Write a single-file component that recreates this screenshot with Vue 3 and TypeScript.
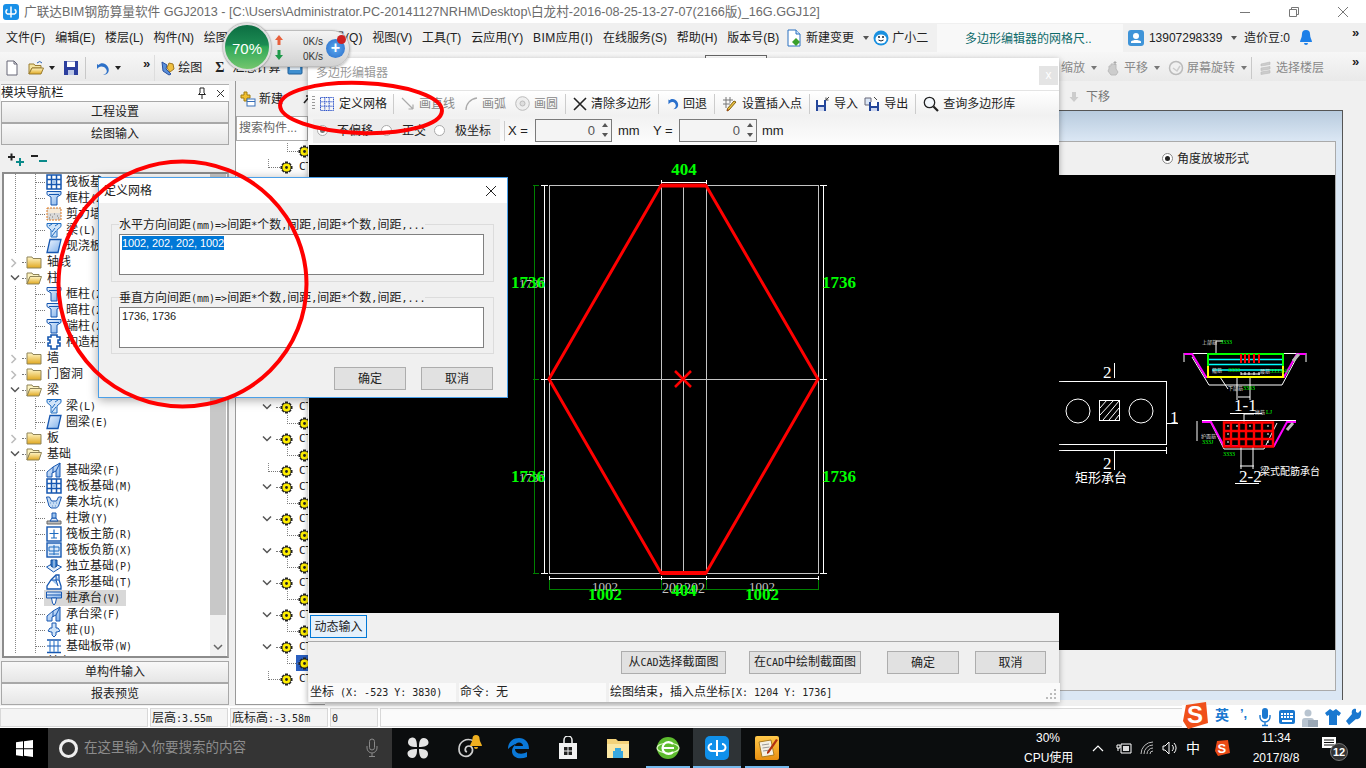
<script setup lang="ts">
import { h } from 'vue';

// CJK at 12px with half-width ascii, like the old bitmap font of the app
const Sim = (props: { t: string }) =>
  (props.t.match(/[\x00-\x7f]+|[^\x00-\x7f]+/g) ?? []).map((s) =>
    h('span', { class: /^[\x00-\x7f]/.test(s) ? 'asc' : '' }, s),
  );
Sim.props = ['t'];

const title =
  '广联达BIM钢筋算量软件 GGJ2013 - [C:\\Users\\Administrator.PC-20141127NRHM\\Desktop\\白龙村-2016-08-25-13-27-07(2166版)_16G.GGJ12]';

const menus = ['文件(F)', '编辑(E)', '楼层(L)', '构件(N)', '绘图(D)', '修改(M)', '钢筋量(Q)', '视图(V)', '工具(T)', '云应用(Y)', 'BIM应用(I)', '在线服务(S)', '帮助(H)', '版本号(B)'];

type Node = { label: string; icon: string; kind: 'closed' | 'open' | 'leaf'; hi?: boolean };
const navTree: Node[] = [
  { label: '筏板基', icon: 'i-raft', kind: 'leaf' },
  { label: '框柱(Z)', icon: 'i-col', kind: 'leaf' },
  { label: '剪力墙(Q)', icon: 'i-wall', kind: 'leaf' },
  { label: '梁(L)', icon: 'i-beam', kind: 'leaf' },
  { label: '现浇板(B)', icon: 'i-slab', kind: 'leaf' },
  { label: '轴线', icon: 'i-folder', kind: 'closed' },
  { label: '柱', icon: 'i-folder-open', kind: 'open' },
  { label: '框柱(Z)', icon: 'i-col', kind: 'leaf' },
  { label: '暗柱(Z)', icon: 'i-col', kind: 'leaf' },
  { label: '端柱(Z)', icon: 'i-col', kind: 'leaf' },
  { label: '构造柱(Z)', icon: 'i-post', kind: 'leaf' },
  { label: '墙', icon: 'i-folder', kind: 'closed' },
  { label: '门窗洞', icon: 'i-folder', kind: 'closed' },
  { label: '梁', icon: 'i-folder-open', kind: 'open' },
  { label: '梁(L)', icon: 'i-beam', kind: 'leaf' },
  { label: '圈梁(E)', icon: 'i-slab', kind: 'leaf' },
  { label: '板', icon: 'i-folder', kind: 'closed' },
  { label: '基础', icon: 'i-folder-open', kind: 'open' },
  { label: '基础梁(F)', icon: 'i-fbeam', kind: 'leaf' },
  { label: '筏板基础(M)', icon: 'i-raft', kind: 'leaf' },
  { label: '集水坑(K)', icon: 'i-pit', kind: 'leaf' },
  { label: '柱墩(Y)', icon: 'i-pier', kind: 'leaf' },
  { label: '筏板主筋(R)', icon: 'i-bar1', kind: 'leaf' },
  { label: '筏板负筋(X)', icon: 'i-bar2', kind: 'leaf' },
  { label: '独立基础(P)', icon: 'i-ind', kind: 'leaf' },
  { label: '条形基础(T)', icon: 'i-strip', kind: 'leaf' },
  { label: '桩承台(V)', icon: 'i-cap', kind: 'leaf', hi: true },
  { label: '承台梁(F)', icon: 'i-fbeam', kind: 'leaf' },
  { label: '桩(U)', icon: 'i-pile', kind: 'leaf' },
  { label: '基础板带(W)', icon: 'i-band', kind: 'leaf' },
  { label: '其它', icon: 'i-folder', kind: 'closed' },
];

// c = child, l = leaf, p = parent, s = selected child
const ctRows = ('cl' + 'pc'.repeat(7) + 'pcpc' + 'l' + 'pc'.repeat(5) + 'ps' + 'l').split('');

const apps = [
  { icon: 't-pin' },
  { icon: 't-swirl' },
  { icon: 't-edge' },
  { icon: 't-store' },
  { icon: 't-files' },
  { icon: 't-green', open: true },
  { icon: 't-app', open: true, active: true },
  { icon: 't-note', open: true },
];
</script>

<template>
  <div class="root">
    <svg class="defs" width="0" height="0">
      <defs>
        <linearGradient id="g-gold" x1="0" y1="0" x2="0" y2="1"><stop offset="0" stop-color="#fff6c8" /><stop offset="1" stop-color="#e0a820" /></linearGradient>
        <linearGradient id="g-blue" x1="0" y1="0" x2="1" y2="1"><stop offset="0" stop-color="#f0f6ff" /><stop offset="1" stop-color="#7fb0ea" /></linearGradient>
        <linearGradient id="g-note" x1="0" y1="0" x2="0" y2="1"><stop offset="0" stop-color="#ffc84a" /><stop offset="1" stop-color="#e88f10" /></linearGradient>
      </defs>
      <symbol id="i-folder" viewBox="0 0 16 16"><path d="M1 3h5l1 1.500h8V14H1z" fill="url(#g-gold)" stroke="#8f8458" /></symbol>
      <symbol id="i-folder-open" viewBox="0 0 16 16"><path d="M1 3h5l1 1.500h6V7H4L1 14z" fill="#fdf3c0" stroke="#8f8458" /><path d="M1 14l3-7.500h11.500L13 14z" fill="url(#g-gold)" stroke="#8f8458" /></symbol>
      <symbol id="i-col" viewBox="0 0 16 16"><path d="M1 1.500h14v3L11 7v8H5V7L1 4.500z" fill="url(#g-blue)" stroke="#1657b0" /><path d="M3 4.500h10" stroke="#1657b0" /></symbol>
      <symbol id="i-raft" viewBox="0 0 16 16"><rect x="1" y="1" width="14" height="14" fill="#fff" stroke="#1657b0" stroke-width="1.500" /><path d="M5.500 1v14M10.500 1v14M1 5.500h14M1 10.500h14" stroke="#1657b0" stroke-width="1.500" /><rect x="6.500" y="6.500" width="3" height="3" fill="#9cc3ee" /></symbol>
      <symbol id="i-wall" viewBox="0 0 16 16"><rect x="1" y="2" width="14" height="12" fill="#d8d8d8" stroke="#e07b20" stroke-dasharray="2 1" /><path d="M2 3h12v4H2z" fill="#f6ead8" /><path d="M4 9h1M8 8h1M11 10h1M6 11h1M3 12h1M12 12h1" stroke="#777" /></symbol>
      <symbol id="i-beam" viewBox="0 0 16 16"><path d="M1 1.500h14v3L11 8v7H5V8L1 4.500z" fill="#cfe3f8" stroke="#1f6cc0" /><path d="M6 14l4-5M6 10l3-4M3 4l3-2M9 4l3-2" stroke="#1f6cc0" /></symbol>
      <symbol id="i-slab" viewBox="0 0 16 16"><path d="M4 1.500h11L12 14.500H1z" fill="url(#g-blue)" stroke="#1657b0" stroke-width="1.300" /></symbol>
      <symbol id="i-post" viewBox="0 0 16 16"><path d="M5 1h6v2h3v3h-2v3h2v3h-3v3H5v-3H2V9h2V6H2V3h3z" fill="#fff" stroke="#1657b0" stroke-width="1.600" /></symbol>
      <symbol id="i-fbeam" viewBox="0 0 16 16"><path d="M1 15V10L7 5l7-4v14h-4V9L6 11v4z" fill="url(#g-blue)" stroke="#1657b0" /><path d="M10 9l4-8M7 5v6" stroke="#1657b0" /></symbol>
      <symbol id="i-pit" viewBox="0 0 16 16"><path d="M0.500 3h3l2 4h5l2-4h3l-3 9-2 2H5l-2-2z" fill="#c6dcf4" stroke="#1657b0" /><path d="M4 9h1M7 9h1M10 9h1M6 12h1M9 12h1" stroke="#5c90cc" /></symbol>
      <symbol id="i-pier" viewBox="0 0 16 16"><path d="M1 14v-3h14v3z" fill="#bcbcbc" stroke="#666" /><path d="M4 11l2-3h4l2 3z" fill="#dfe9f6" stroke="#1657b0" /><path d="M6 8V3h4v5z" fill="#9cc3ee" stroke="#1657b0" /></symbol>
      <symbol id="i-bar1" viewBox="0 0 16 16"><rect x="1" y="1" width="14" height="14" fill="#fff" stroke="#1657b0" stroke-width="1.400" /><path d="M3.500 7.500h9M8 3.500v8M5 12h6" stroke="#1f6cc0" stroke-width="1.200" fill="none" /></symbol>
      <symbol id="i-bar2" viewBox="0 0 16 16"><rect x="1" y="1" width="14" height="14" fill="#dbe9fa" stroke="#1657b0" stroke-width="1.400" /><path d="M3 5h10v4H3zM8 3v10M3 12h10" stroke="#1f6cc0" fill="none" /></symbol>
      <symbol id="i-ind" viewBox="0 0 16 16"><path d="M0.500 9l7-4 8 4-8 5z" fill="#e6f0fb" stroke="#1657b0" /><path d="M5 2h6v6l-3 2-3-2z" fill="#3a7cc8" stroke="#0e4a98" /><path d="M8 2v8" stroke="#cfe3f8" /></symbol>
      <symbol id="i-strip" viewBox="0 0 16 16"><path d="M1 15v-3l4-6 5-5h3v5l2 6v3H1z" fill="#fff" stroke="#1657b0" stroke-width="1.300" /><path d="M10 1v5l3 0M5 6h5l2 6" stroke="#1657b0" fill="#9cc3ee" /></symbol>
      <symbol id="i-cap" viewBox="0 0 16 16"><path d="M0.500 2h15v6H0.500z" fill="url(#g-blue)" stroke="#1657b0" /><path d="M5.500 8h5l-1 5-1.500 2-1.500-2z" fill="#fff" stroke="#1657b0" /><path d="M0.500 5h15" stroke="#1657b0" /></symbol>
      <symbol id="i-pile" viewBox="0 0 16 16"><path d="M6 1h4v5h2l2 3-3 1h-1v3l-2 2-2-2v-3H5L2 9l2-3h2z" fill="#cfe3f8" stroke="#1657b0" /></symbol>
      <symbol id="i-band" viewBox="0 0 16 16"><path d="M1 2h14M1 14.500h14" stroke="#1657b0" stroke-width="1.600" /><path d="M4 3v11M12 3v11M8 3v11" stroke="#6aa0dc" stroke-width="1.500" /><path d="M1 8h14" stroke="#1657b0" /></symbol>
      <symbol id="i-gear" viewBox="0 0 13 13"><path d="M5 0.500h3v2l1.500-1 2 2-1 1.500h2v3h-2l1 1.500-2 2-1.500-1v2H5v-2l-1.500 1-2-2 1-1.500h-2v-3h2l-1-1.500 2-2 1.500 1z" fill="#222" /><circle cx="6.500" cy="6.500" r="4" fill="#ffee00" /><circle cx="6.500" cy="6.500" r="1.400" fill="#222" /></symbol>
      <symbol id="i-logo" viewBox="0 0 16 16"><rect width="16" height="16" rx="3" fill="#1890e8" /><path d="M8 2.500v11M4.500 5.500A2.400 2.400 0 0 0 4.500 10h7a2.400 2.400 0 0 0 0-4.500" fill="none" stroke="#fff" stroke-width="1.500" /></symbol>
      <symbol id="t-pin" viewBox="0 0 24 24"><path d="M11 11C11 5 10 1 6 1.500 2 2 1 7 3 9c2 2 5 2 8 2zM13 11c5 0 10-1 9.500-5S17 1 15 3c-2 2-2 5-2 8zM13 13c0 5 1 10 5 9.500s5-5 3-7.500c-2-2-5-2-8-2zM11 13c-5 0-10 1-9.500 5S7 23 9 21c2-2 2-5 2-8z" fill="#e4e4e4" /></symbol>
      <symbol id="t-swirl" viewBox="0 0 24 24"><path d="M18 5C10 1 3 6 3 13s7 9 11 6 3-9-1-9-5 5-2 6" fill="none" stroke="#cfcfcf" stroke-width="1.700" /></symbol>
      <symbol id="t-edge" viewBox="0 0 24 24"><path d="M2 13C2 5 8 2 13 2c6 0 10 4 10 11H9c0 5 7 6 12 3v5c-7 3-15 1-15-6 0-3 2-6 5-7-3 0-6 2-9 5z" fill="#0a78d8" /><path d="M9 10c0-2 2-3.500 4-3.500S17 8 17 10z" fill="#0c0c0c" /></symbol>
      <symbol id="t-store" viewBox="0 0 24 24"><path d="M3 7h18v16H3z" fill="#f2f2f2" /><path d="M8 7V4a4 4 0 0 1 8 0v3" fill="none" stroke="#f2f2f2" stroke-width="1.500" /><path d="M8 11h3.500v3.500H8zM12.500 11H16v3.500h-3.500zM8 15.500h3.500V19H8zM12.500 15.500H16V19h-3.500z" fill="#222" /></symbol>
      <symbol id="t-files" viewBox="0 0 24 24"><path d="M1 3h9l2 2h11v17H1z" fill="#f4d27a" /><path d="M1 8h22v14H1z" fill="#fbe7a4" /><path d="M7 15h10v7H7z" fill="#38a8e0" /><path d="M9 12h6v3H9z" fill="#38a8e0" /></symbol>
      <symbol id="t-green" viewBox="0 0 24 24"><circle cx="12" cy="12" r="11" fill="#5dbb2e" /><ellipse cx="12" cy="12" rx="11" ry="5" fill="none" stroke="#d8f5c0" stroke-width="1.200" /><path d="M6 12h12M17 8a6 6 0 1 0 0 8" fill="none" stroke="#fff" stroke-width="2.200" /></symbol>
      <symbol id="t-app" viewBox="0 0 24 24"><rect width="24" height="24" rx="5" fill="#1090ea" /><path d="M12 4v16M7 8a3.500 3.500 0 0 0 0 7h10a3.500 3.500 0 0 0 0-7" fill="none" stroke="#fff" stroke-width="2" /></symbol>
      <symbol id="t-note" viewBox="0 0 24 24"><rect width="24" height="24" rx="2" fill="url(#g-note)" /><path d="M4 6l12-2 3 15-12 2z" fill="#f4f0e4" stroke="#a87c20" /><path d="M7 9l7-1M7.500 12l7-1M8 15l7-1" stroke="#999" /><path d="M21 3l2 1-9 13-2 1 0-2z" fill="#b03010" /></symbol>
    </svg>

    <!-- title bar -->
    <header class="titlebar">
      <svg class="logo"><use href="#i-logo" /></svg>
      <span class="title-text">{{ title }}</span>
      <div class="winctl">
        <svg width="12" height="12" viewBox="0 0 12 12"><path d="M1 6.500h10" stroke="#777" /></svg>
        <svg width="12" height="12" viewBox="0 0 12 12"><path d="M1.500 3.500h7v7h-7zM3.500 3.500v-2h7v7h-2" fill="none" stroke="#777" /></svg>
        <svg width="12" height="12" viewBox="0 0 12 12"><path d="M1 1l10 10M11 1L1 11" stroke="#777" /></svg>
      </div>
    </header>

    <!-- menu bar -->
    <nav class="menubar">
      <span v-for="m in menus" :key="m" class="menu" :class="{ gapped: m === '钢筋量(Q)', wide: m === 'BIM应用(I)' }">{{ m }}</span>
      <svg class="ico16 newchg" viewBox="0 0 16 18"><path d="M2 1h8l4 4v12H2z" fill="#fff" stroke="#2a70c0" /><path d="M10 1v4h4" fill="#cfe3f8" stroke="#2a70c0" /><path d="M10 9l4 4-4 4-4-4z" fill="#3aa02c" /></svg>
      <span class="menu">新建变更</span><i class="caret"></i>
      <svg class="ico16 bot" viewBox="0 0 16 16"><circle cx="8" cy="8" r="7.500" fill="#1890e0" /><ellipse cx="8" cy="9" rx="5.500" ry="4.500" fill="#fff" /><circle cx="6" cy="7" r="1" fill="#123" /><circle cx="10" cy="7" r="1" fill="#123" /><path d="M5.500 10q2.500 2 5 0" stroke="#123" fill="none" /></svg>
      <span class="menu gx">广小二</span>
      <div class="tip-tab">多边形编辑器的网格尺..</div>
      <svg class="ico16 avatar" viewBox="0 0 16 16"><rect width="16" height="16" rx="3" fill="#3f94d8" /><circle cx="8" cy="6" r="3" fill="#fff" /><path d="M3 13h10v-1.500c-2-2-8-2-10 0z" fill="#fff" /></svg>
      <span class="menu phone">13907298339</span><i class="caret"></i>
      <span class="menu bean">造价豆:0</span>
      <svg class="bell" width="12" height="18" viewBox="0 0 12 18"><path d="M6 1a4 4 0 0 0-4 4c0 4-2 6-2 8h12c0-2-2-4-2-8a4 4 0 0 0-4-4zM4 14h4a2 2 0 0 1-4 0z" fill="#1c7fe8" /></svg>
      <span class="chev">»</span>
    </nav>

    <!-- main tool bar -->
    <div class="toolbar">
      <svg class="ico16" viewBox="0 0 16 16"><path d="M3 1h7l3 3v11H3z" fill="#fff" stroke="#667" /><path d="M10 1v3h3" fill="none" stroke="#667" /></svg>
      <svg class="ico16 mg6" viewBox="0 0 16 16"><path d="M1 4h5l1 1.500h6V8H4l-3 6z" fill="#f4e4a0" stroke="#9a7c30" /><path d="M1 14l3-6h11.500L13 14z" fill="url(#g-gold)" stroke="#9a7c30" /><path d="M9 3q3-3 5 0" stroke="#2a60b0" fill="none" /></svg>
      <i class="caret dark"></i>
      <svg class="ico16 mg6" viewBox="0 0 16 16"><path d="M1 1h14v14H1z" fill="#2c3f9e" /><path d="M4 1.500h8V7H4z" fill="#fff" /><path d="M5 10h6v5H5z" fill="#bcc7e6" /></svg>
      <span class="vsep"></span>
      <svg class="ico16" viewBox="0 0 16 16"><path d="M3 4v5l1.500-1.500C6.500 6 10 6 12 9s0 5-3 6c5 0 7-4 5-8S7 2 4.500 5L3 4z" fill="#2c70c8" /></svg>
      <i class="caret dark"></i>
      <span class="chev tb">»</span>
      <span class="bar-grip"></span>
      <svg class="ico16" viewBox="0 0 16 16"><path d="M2 2l5 3-1 4 5 5-2 1-6-4z" fill="#5a8fd8" stroke="#2a50a0" /><path d="M9 3l4 1 1 5-4 3-3-4z" fill="#f0c040" stroke="#a07820" /></svg>
      <span class="tool">绘图</span>
      <span class="sigma">Σ</span>
      <span class="tool">汇总计算</span>
      <svg class="ico16" viewBox="0 0 16 16"><rect x="1" y="2" width="14" height="12" rx="1" fill="#3f8fd0" stroke="#205f98" /><rect x="3" y="4" width="10" height="6" fill="#e8f2fb" /></svg>
      <span class="peek"></span>
      <div class="tools-right">
        <span class="tool off">缩放</span><i class="caret"></i>
        <svg class="ico16" viewBox="0 0 16 16"><path d="M4 9V6h2V4h5v5l2 3-2 3H6L3 11z" fill="#ccc" stroke="#bbb" /><path d="M10 1v4M8.500 2.500h3" stroke="#aaa" /></svg>
        <span class="tool off">平移</span><i class="caret"></i>
        <svg class="ico16" viewBox="0 0 16 16"><circle cx="8" cy="8" r="6.500" fill="#f0f0f0" stroke="#bbb" stroke-width="1.500" /><path d="M5 8l4 3 3-5" fill="none" stroke="#ccc" stroke-width="1.500" /></svg>
        <span class="tool off">屏幕旋转</span><i class="caret"></i>
        <span class="vsep"></span>
        <svg class="ico16" viewBox="0 0 16 16"><path d="M4 4l9-2v2.500l-9 1.500zM4 8l9-1.500V9l-9 1.500zM4 12l9-1.500V13l-9 1.500z" fill="#ccc" stroke="#bbb" stroke-width=".6" /></svg>
        <span class="tool off">选择楼层</span>
        <span class="chev rt">»</span>
      </div>
    </div>

    <!-- work area -->
    <div class="work">
      <aside class="nav">
        <div class="nav-head">
          <span>模块导航栏</span>
          <svg width="10" height="12" viewBox="0 0 10 12"><path d="M3 1h4v5l1.500 1.500h-7L3 6zM5 7.500V12" fill="none" stroke="#222" /></svg>
          <svg width="9" height="9" viewBox="0 0 9 9"><path d="M1 1l7 7M8 1L1 8" stroke="#333" /></svg>
        </div>
        <button class="nav-btn">工程设置</button>
        <button class="nav-btn">绘图输入</button>
        <div class="nav-tools">
          <svg width="18" height="16" viewBox="0 0 18 16"><path d="M1 6h7M4.500 2.500v7" stroke="#222" stroke-width="2" /><path d="M9 11h8M13 7v8" stroke="#0a8a8a" stroke-width="2" /></svg>
          <svg width="18" height="16" viewBox="0 0 18 16"><path d="M1 5h7" stroke="#222" stroke-width="2" /><path d="M9 10h8" stroke="#0a8a8a" stroke-width="2" /></svg>
        </div>
        <div class="nav-tree">
          <div
            v-for="(n, i) in navTree"
            :key="i"
            class="nrow"
            :class="n.kind"
          >
            <svg v-if="n.kind === 'closed'" class="exp" width="8" height="10" viewBox="0 0 8 10"><path d="M1.500 1l4 4-4 4" fill="none" stroke="#bbb" stroke-width="1.500" /></svg>
            <svg v-if="n.kind === 'open'" class="exp" width="10" height="8" viewBox="0 0 10 8"><path d="M1 1.500l4 4 4-4" fill="none" stroke="#555" stroke-width="1.500" /></svg>
            <span class="hook"></span>
            <span class="nitem" :class="{ hi: n.hi }">
              <svg class="ico16"><use :href="'#' + n.icon" /></svg>
              <span class="nlabel"><Sim :t="n.label" /></span>
            </span>
          </div>
          <div class="scroll">
            <div class="thumb"></div>
            <svg width="10" height="7" viewBox="0 0 10 7"><path d="M1 1l4 4 4-4" fill="none" stroke="#666" stroke-width="1.500" /></svg>
          </div>
        </div>
        <button class="nav-btn low">单构件输入</button>
        <button class="nav-btn">报表预览</button>
      </aside>

      <section class="mid">
        <div class="mid-tools">
          <svg class="ico16" viewBox="0 0 16 16"><path d="M4 1h3v3h3v3H7v3H4V7H1V4h3z" fill="#f2c030" stroke="#a07c10" /><rect x="7" y="8" width="8" height="7" fill="#fff" stroke="#3a70b8" /><path d="M7 10.500h8" stroke="#3a70b8" /></svg>
          <span>新建</span>
          <svg class="arrow" width="10" height="12" viewBox="0 0 10 12"><path d="M2 10l6-7M4 3h4v4" fill="none" stroke="#222" stroke-width="1.600" /></svg>
        </div>
        <div class="search">搜索构件...</div>
        <div class="ct-tree">
          <div v-for="(r, i) in ctRows" :key="i" class="ct" :class="'ct-' + r">
            <template v-if="r === 'p'">
              <svg class="ct-exp" width="10" height="8" viewBox="0 0 10 8"><path d="M1 1.500l4 4 4-4" fill="none" stroke="#555" stroke-width="1.500" /></svg>
              <span class="ct-dot"></span>
            </template>
            <span v-else class="ct-hook"></span>
            <svg class="gear"><use href="#i-gear" /></svg>
            <span class="asc ct-text">CT</span>
          </div>
        </div>
      </section>

      <section class="right">
        <div class="sub-tools">
          <svg width="10" height="12" viewBox="0 0 10 12"><path d="M3 1h4v5h2.500L5 11 .5 6H3z" fill="#ccc" /></svg>
          <span>下移</span>
        </div>
        <div class="frame">
          <div class="pane">
            <div class="pane-head"><i class="radio on"></i><span>角度放坡形式</span></div>
            <svg class="preview" width="277" height="475" viewBox="1059 175 277 475">
              <g fill="none" stroke="#fff" shape-rendering="crispEdges">
                <path d="M1059 381.500h108.500V444.500H1059M1059 450.500h108M1167.500 447v7M1167.500 423.500h11M1115.500 363v15M1115.500 450v20" />
                <path d="M1100.500 400.500h20v20h-20z" />
              </g>
              <circle cx="1079" cy="411" r="12" fill="none" stroke="#fff" />
              <circle cx="1142" cy="411" r="12" fill="none" stroke="#fff" />
              <path d="M1101 408l7-8M1101 415l14-15M1104 420l16-19M1110 420l10-12M1116 420l4-5" stroke="#fff" />
              <text x="1104" y="378" class="cad w16">2</text>
              <text x="1171" y="423" class="cad w16">1</text>
              <text x="1104" y="469" class="cad w16">2</text>
              <text x="1076" y="482" class="cad w13">矩形承台</text>

              <!-- section 1-1 -->
              <path d="M1185 353.500h122M1193 357l17 28h73l15-28M1185 353v9M1307 353v9M1238 378v22M1251 378v22M1239 397h12M1221 377l8 12M1224 341h-7v12" fill="none" stroke="#fff" />
              <path d="M1185 354h8l14 23h13M1307 354h-9l-13 23h-15" fill="none" stroke="#f0f" stroke-width="2" />
              <path d="M1209 375v-21h75v21" fill="none" stroke="#0f0" stroke-width="2" />
              <path d="M1209 366v11h75v-11" fill="none" stroke="#ff0" stroke-width="2" />
              <path d="M1210 359.500h73M1210 364.500h73M1213 370h70" stroke="#0ff" stroke-width="1.500" />
              <path d="M1242 354v9M1246 354v9M1250 354v9M1255 354v9M1260 354v9" stroke="#f00" stroke-width="2" />
              <path d="M1242 372v3M1246 372v3M1250 372v3M1255 372v3M1260 372v3M1242 374h19" stroke="#fff" />
              <text x="1203" y="344" class="cad w6">上部筋</text><text x="1221" y="344" class="cad g6">3333</text>
              <text x="1213" y="372" class="cad w6">箍筋</text><text x="1229" y="372" class="cad g6">3333</text>
              <text x="1261" y="373" class="cad w6">腰筋</text><text x="1271" y="373" class="cad g6">3333(4)</text>
              <text x="1229" y="390" class="cad w6">下部筋</text><text x="1244" y="390" class="cad g6">3333</text>
              <text x="1235" y="411" class="cad w16">1-1</text>
              <path d="M1231 413.500h32" stroke="#fff" />

              <!-- section 2-2 -->
              <path d="M1203 420.500h94M1212 423l13 26h40l13-26M1198 421v20M1242 447v22M1254 447v22M1241 466h14M1255 414h-10v10" fill="none" stroke="#fff" />
              <path d="M1203 422h9l13 24h15M1297 422h-9l-13 24h-12" fill="none" stroke="#f0f" stroke-width="2" />
              <path d="M1225 422.500h49v24h-49zM1232 422v24M1240 422v24M1247 422v24M1255 422v24M1263 422v24M1225 431h49M1225 439h49" fill="none" stroke="#f00" stroke-width="2.400" />
              <path d="M1228 426h2M1237 426h2M1250 426h2M1268 426h2M1228 434h2M1268 434h2M1228 442h2M1268 442h2" stroke="#fff" />
              <text x="1256" y="414" class="cad w6">缘筋</text><text x="1267" y="414" class="cad g6">LJ</text>
              <text x="1202" y="438" class="cad w6">护面筋</text><text x="1203" y="444" class="cad g6">333J</text>
              <text x="1224" y="456" class="cad g6">3333</text>
              <text x="1240" y="482" class="cad w16">2-2</text>
              <path d="M1236 483.500h24" stroke="#fff" />
              <text x="1261" y="475" class="cad w10">梁式配筋承台</text>
              <path d="M1294 361l6-7M1288 430l6-7" stroke="#bbb" stroke-width="3" />
            </svg>
          </div>
        </div>
      </section>
    </div>

    <!-- status bar -->
    <footer class="statusbar">
      <span class="seg s1"></span>
      <span class="seg s2"><Sim t="层高:3.55m" /></span>
      <span class="seg s3"><Sim t="底标高:-3.58m" /></span>
      <span class="seg s4"><Sim t="0" /></span>
      <span class="seg s5"></span>
    </footer>

    <!-- taskbar -->
    <div class="taskbar">
      <div class="start">
        <svg width="17" height="17" viewBox="0 0 17 17"><path d="M0 2.300l7-1v7H0zM8 1.200L17 0v8.300H8zM0 9.300h7v7l-7-1zM8 9.300h9V17l-9-1.200z" fill="#fff" /></svg>
      </div>
      <div class="searchbox">
        <span class="cortana"></span>
        <span class="ph">在这里输入你要搜索的内容</span>
        <svg class="mic" width="12" height="20" viewBox="0 0 12 20"><rect x="3.500" y="1" width="5" height="11" rx="2.500" fill="none" stroke="#8a8a8a" /><path d="M1 8v2a5 5 0 0 0 10 0V8M6 15v3M3 18.500h6" fill="none" stroke="#8a8a8a" /></svg>
      </div>
      <div class="apps">
        <div v-for="a in apps" :key="a.icon" class="app" :class="{ open: a.open, active: a.active }">
          <svg class="app-ico"><use :href="'#' + a.icon" /></svg>
          <svg v-if="a.icon === 't-swirl'" class="alert" width="12" height="14" viewBox="0 0 12 14"><path d="M6 0a3.500 3.500 0 0 0-3.500 3.500C2.500 7 0 9 0 11h12c0-2-2.500-4-2.500-7.500A3.500 3.500 0 0 0 6 0zM4 12h4a2 2 0 0 1-4 0z" fill="#f0b020" /></svg>
        </div>
      </div>
      <div class="tray">
        <div class="cpu"><span>30%</span><span>CPU使用</span></div>
        <svg class="tr up" width="12" height="8" viewBox="0 0 12 8"><path d="M1 7l5-5 5 5" fill="none" stroke="#fff" stroke-width="1.200" /></svg>
        <svg class="tr bat" width="16" height="14" viewBox="0 0 16 14"><path d="M5 3h10v9H5z" fill="none" stroke="#fff" /><path d="M7 5h6v5H7z" fill="#ddd" /><path d="M1 4h3v3H1zM2 7v3" stroke="#fff" fill="none" /></svg>
        <svg class="tr wifi" width="16" height="14" viewBox="0 0 16 14"><path d="M1 13A12 12 0 0 1 13 1M4 13a9 9 0 0 1 9-9M7 13a6 6 0 0 1 6-6M10 13a3 3 0 0 1 3-3" fill="none" stroke="#bbb" /></svg>
        <svg class="tr vol" width="16" height="14" viewBox="0 0 16 14"><path d="M1 5h2l4-4v12l-4-4H1z" fill="none" stroke="#fff" /><path d="M10 4a4 4 0 0 1 0 6M12 2a7 7 0 0 1 0 10" fill="none" stroke="#fff" /></svg>
        <span class="ime">中</span>
        <svg class="tr sg" width="16" height="18" viewBox="0 0 16 18"><path d="M3 2l11-1 2 13-12 3-3-5z" fill="#ea4a16" /><text x="3.500" y="14" class="slogo">S</text></svg>
        <div class="clock"><span>11:34</span><span>2017/8/8</span></div>
        <div class="notif">
          <svg width="14" height="16" viewBox="0 0 14 16"><path d="M0 1h14v11H0z" fill="#fff" /><path d="M2 4h10M2 6.500h10M2 9h10" stroke="#111" /></svg>
          <span class="badge">12</span>
        </div>
      </div>
    </div>

    <!-- polygon editor window -->
    <div class="editor">
      <div class="ed-title">
        <span>多边形编辑器</span>
        <span class="ed-close">x</span>
      </div>
      <div class="ed-tools">
        <span class="grip"></span>
        <div class="t first">
          <svg class="ico14" viewBox="0 0 14 14"><path d="M.5.500h13v13H.500zM4.800.500v13M9.200.500v13M.5 4.800h13M.5 9.200h13" fill="none" stroke="#2a50c8" stroke-dasharray="1.200 .6" /></svg>
          <span>定义网格</span>
        </div>
        <span class="sep"></span>
        <div class="t off">
          <svg class="ico14" viewBox="0 0 14 14"><path d="M1 1l11 11M12 12V7.500M12 12H7.500" fill="none" stroke="#aaa" stroke-width="1.200" /></svg>
          <span>画直线</span>
        </div>
        <div class="t off">
          <svg class="ico14" viewBox="0 0 14 14"><path d="M2 13C2 7 6 2 13 1" fill="none" stroke="#aaa" stroke-width="1.300" /></svg>
          <span>画弧</span>
        </div>
        <div class="t off">
          <svg class="ico15" viewBox="0 0 15 15"><circle cx="7.500" cy="7.500" r="6.800" fill="#eee" stroke="#bbb" /><circle cx="7.500" cy="7.500" r="2.500" fill="#ddd" stroke="#bbb" /></svg>
          <span>画圆</span>
        </div>
        <span class="sep"></span>
        <div class="t">
          <svg class="ico14" viewBox="0 0 14 14"><path d="M1 1l12 12M13 1L1 13" stroke="#222" stroke-width="1.600" /></svg>
          <span>清除多边形</span>
        </div>
        <span class="sep"></span>
        <div class="t">
          <svg class="ico13" viewBox="0 0 16 16"><path d="M3 3v6l2-1.800C7 5.500 10 6 11.500 8.500s0 5-2.500 6.500c5 0 7-4 5.500-8S7 1 4.500 4z" fill="#2a70cc" /></svg>
          <span>回退</span>
        </div>
        <span class="sep"></span>
        <div class="t">
          <svg class="ico16" viewBox="0 0 16 16"><path d="M4 1v11M8 1v6M1 4h10M1 8h7" stroke="#777" /><path d="M14 6L7 14l-2 1 .5-2.500L12 5z" fill="#e8c040" stroke="#806010" /><path d="M5.500 13L5 15l2-1z" fill="#b03020" /></svg>
          <span>设置插入点</span>
        </div>
        <span class="sep tight"></span>
        <div class="t">
          <svg class="ico16" viewBox="0 0 16 16"><path d="M2 4h10v11H2z" fill="#24469a" /><path d="M4 4h6v5H4z" fill="#fff" /><path d="M4 11h6v4H4z" fill="#cdd6ee" /><path d="M15 1l-3 3M12 1.500V4h2.500" fill="none" stroke="#444" /></svg>
          <span>导入</span>
        </div>
        <div class="t near">
          <svg class="ico16" viewBox="0 0 16 16"><path d="M1 2h6v7H1z" fill="#dbe6f6" stroke="#667" /><path d="M5 6h10v9H5z" fill="#24469a" /><path d="M7 6h6v4H7z" fill="#fff" /><path d="M7 12h6v3H7z" fill="#cdd6ee" /><path d="M10 1l3 3" stroke="#444" /></svg>
          <span>导出</span>
        </div>
        <span class="sep"></span>
        <div class="t">
          <svg class="ico16" viewBox="0 0 16 16"><circle cx="6.500" cy="6.500" r="5.200" fill="#f4f8fc" stroke="#222" stroke-width="1.300" /><path d="M10.500 10.500L15 15" stroke="#222" stroke-width="2.200" /></svg>
          <span>查询多边形库</span>
        </div>
      </div>
      <div class="ed-opts">
        <div class="opt-group">
          <label class="opt"><i class="radio on"></i>不偏移</label>
          <label class="opt"><i class="radio"></i>正交</label>
          <label class="opt"><i class="radio"></i>极坐标</label>
        </div>
        <span class="sep opt-sep"></span>
        <span class="lat x-lab">X =</span>
        <div class="spin sx">0<i class="spin-btns"></i></div>
        <span class="lat mm">mm</span>
        <span class="lat y-lab">Y =</span>
        <div class="spin sy">0<i class="spin-btns"></i></div>
        <span class="lat mm2">mm</span>
      </div>
      <svg class="canvas" width="750" height="468" viewBox="309 145 750 468">
        <g stroke="#c4c4c4" shape-rendering="crispEdges" fill="none">
          <path d="M549.500 185v388M661.500 185v388M683.500 185v388M706.500 185v388M818.500 185v388M549 185.500h270M549 379.500h270M549 573.500h270" />
        </g>
        <g stroke="#fff" shape-rendering="crispEdges" fill="none">
          <path d="M544.500 185v388M823.500 185v388M661 182.500h45M549 578.500h270" />
          <path d="M541 185.500h7M541 379.500h7M541 573.500h7M820 185.500h7M820 379.500h7M820 573.500h7M661.500 180v5M706.500 180v5M549.500 576v5M661.500 576v5M706.500 576v5M818.500 576v5" />
        </g>
        <g stroke="#008000" shape-rendering="crispEdges" fill="none">
          <path d="M534.500 185v388M533 185.500h6M533 379.500h6M533 573.500h6M549 589.500h270M549.500 580v10M661.500 580v10M706.500 580v10M818.500 580v10" />
        </g>
        <text x="519" y="288" class="dim-g">1736</text>
        <text x="519" y="482" class="dim-g">1736</text>
        <text x="592" y="591" class="dim-g">1002</text>
        <text x="749" y="591" class="dim-g">1002</text>
        <text x="662" y="593" class="dim-g2">202</text>
        <text x="684" y="593" class="dim-g2">202</text>
        <polygon points="661,185.500 706,185.500 818,379 706,573 661,573 549,379" fill="none" stroke="#f00" stroke-width="3" />
        <path d="M661 185.500h45M661 573h45" stroke="#f00" stroke-width="4" />
        <path d="M675 371l16 16M691 371l-16 16" stroke="#f00" stroke-width="2.500" />
        <text x="684" y="175" class="dim c">404</text>
        <text x="511" y="288" class="dim">1736</text>
        <text x="511" y="482" class="dim">1736</text>
        <text x="822" y="288" class="dim">1736</text>
        <text x="822" y="482" class="dim">1736</text>
        <text x="605" y="600" class="dim c">1002</text>
        <text x="684" y="596" class="dim c">404</text>
        <text x="762" y="600" class="dim c">1002</text>
      </svg>
      <div class="ed-tabs"><span class="tab"><span>动态输入</span></span></div>
      <div class="ed-btns">
        <button class="btn b1"><Sim t="从CAD选择截面图" /></button>
        <button class="btn b2"><Sim t="在CAD中绘制截面图" /></button>
        <button class="btn b3">确定</button>
        <button class="btn b4">取消</button>
      </div>
      <div class="ed-status">
        <span class="st s-a"><Sim t="坐标 (X: -523 Y: 3830)" /></span>
        <span class="st s-b"><Sim t="命令: 无" /></span>
        <span class="st s-c"><Sim t="绘图结束，插入点坐标[X: 1204 Y: 1736]" /></span>
        <svg class="resize" width="12" height="12" viewBox="0 0 12 12"><path d="M9 1h2v2H9zM5 5h2v2H5zM9 5h2v2H9zM1 9h2v2H1zM5 9h2v2H5zM9 9h2v2H9z" fill="#bbb" /></svg>
      </div>
    </div>

    <!-- define grid dialog -->
    <div class="dialog">
      <div class="dlg-title">
        <span>定义网格</span>
        <svg width="12" height="12" viewBox="0 0 12 12"><path d="M1 1l10 10M11 1L1 11" stroke="#222" /></svg>
      </div>
      <div class="dlg-body">
        <fieldset class="grp">
          <legend><Sim t="水平方向间距(mm)=>间距*个数,间距,间距*个数,间距,..." /></legend>
          <div class="area"><span class="sel">1002, 202, 202, 1002</span></div>
        </fieldset>
        <fieldset class="grp g2">
          <legend><Sim t="垂直方向间距(mm)=>间距*个数,间距,间距*个数,间距,..." /></legend>
          <div class="area"><span>1736, 1736</span></div>
        </fieldset>
        <div class="dlg-btns">
          <button class="btn d1">确定</button>
          <button class="btn d2">取消</button>
        </div>
      </div>
    </div>

    <!-- sogou input bar -->
    <div class="imebar">
      <svg class="sg-big" width="26" height="27" viewBox="0 0 26 27"><path d="M4 3l20-3 2 21-20 6-5-8z" fill="#f0501a" /><text x="5" y="21" class="slogo big">S</text></svg>
      <span class="ime-ch">英</span>
      <span class="ime-dot">’,</span>
      <svg width="12" height="20" viewBox="0 0 12 20" class="ic1"><rect x="3" y="1" width="6" height="11" rx="3" fill="#1a78d0" /><path d="M1 8v2a5 5 0 0 0 10 0V8M6 15v3M3 18.500h6" fill="none" stroke="#1a78d0" stroke-width="1.400" /></svg>
      <svg width="16" height="14" viewBox="0 0 16 14" class="ic2"><rect width="16" height="14" rx="2" fill="#1a78d0" /><path d="M2 3h2v2H2zM5 3h2v2H5zM8 3h2v2H8zM11 3h3v2h-3zM2 6h2v2H2zM5 6h2v2H5zM8 6h2v2H8zM11 6h3v2h-3zM3 10h10v2H3z" fill="#fff" /></svg>
      <svg width="16" height="18" viewBox="0 0 16 18" class="ic3"><circle cx="6" cy="4" r="3.500" fill="#b8c4d0" /><path d="M0 18v-6q0-3 3-3h6q3 0 3 3v6z" fill="#b8c4d0" /><rect x="6" y="11" width="10" height="7" fill="#9aa8b6" /></svg>
      <svg width="16" height="16" viewBox="0 0 16 16" class="ic4"><path d="M5 0l3 2 3-2 5 4-2 3-2-1v10H4V6L2 7 0 4z" fill="#1a78d0" /></svg>
      <svg width="16" height="18" viewBox="0 0 16 18" class="ic5"><path d="M15 2l-3 3-2-1 0-3c-3-1-5 2-4 5L0 13l3 4 7-6c3 1 6-2 5-9z" fill="#1a78d0" /></svg>
    </div>

    <!-- network / memory widget -->
    <div class="widget">
      <div class="ball">70%</div>
      <div class="w-arrows">
        <svg width="8" height="10" viewBox="0 0 8 10"><path d="M4 0l4 5H5.500v5h-3V5H0z" fill="#e8603c" /></svg>
        <svg width="8" height="10" viewBox="0 0 8 10"><path d="M4 10L0 5h2.500V0h3v5H8z" fill="#1f9a4a" /></svg>
      </div>
      <div class="w-speeds"><span>0K/s</span><span>0K/s</span></div>
      <div class="w-plus">+<i></i></div>
    </div>

    <!-- hand drawn marks on the screenshot -->
    <svg class="marks" width="1366" height="768">
      <ellipse cx="182.500" cy="284" rx="124" ry="122.500" fill="none" stroke="#f00" stroke-width="4" />
      <ellipse cx="361" cy="108" rx="81" ry="25" fill="none" stroke="#f00" stroke-width="4" transform="rotate(2 361 108)" />
    </svg>
  </div>
</template>

<style scoped>
.root {
  position: relative;
  width: 1366px;
  height: 768px;
  overflow: hidden;
  background: #f0f0f0;
  font: 12px/16px "Liberation Sans", "Noto Sans CJK SC", sans-serif;
  color: #222;
}
.defs { position: absolute; }
.ico16 { width: 16px; height: 16px; flex: none; }
.ico15 { width: 15px; height: 15px; flex: none; }
.ico14 { width: 14px; height: 14px; flex: none; }
.ico13 { width: 13px; height: 13px; flex: none; }
button { font: inherit; color: inherit; padding: 0; }

.titlebar { height: 23px; display: flex; align-items: center; background: #fff; position: relative; }
.logo { width: 16px; height: 16px; margin: 0 5px 0 3px; }
.title-text { font-size: 12.650px; color: #6b6b6b; white-space: nowrap; }
.winctl { position: absolute; left: 1239px; top: 6px; display: flex; gap: 36px; }
.winctl svg + svg { margin-left: 1px; }

.menubar { height: 29px; display: flex; align-items: center; gap: 9.800px; padding-left: 6px; background: #f0f0f0; white-space: nowrap; position: relative; }
.gapped { margin-left: 3px; }
.wide { letter-spacing: .45px; }
.newchg { margin: 0 -6px 0 -3px; height: 18px; }
.caret { width: 0; height: 0; border: 3px solid transparent; border-top: 4px solid #555; border-bottom: 0; flex: none; }
.caret.dark { border-top-color: #222; }
.menubar .caret { margin-left: -1px; }
.bot { margin-left: -6px; }
.gx { margin-left: -6px; }
.tip-tab { position: absolute; left: 937px; top: 1px; width: 186px; height: 28px; line-height: 30px; background: #f8f8f8; color: #0d6a6a; font-size: 12px; padding-left: 28px; box-sizing: border-box; }
.avatar { margin-left: 190px; }
.phone { margin-left: -5px; }
.bean { margin-left: -3px; }
.chev { position: absolute; left: 1352px; top: 2px; font-size: 13px; font-weight: 700; }

.toolbar { height: 29px; display: flex; align-items: center; padding: 2px 0 0 4px; background: linear-gradient(#f7f7f7, #e9e9e9); position: relative; box-sizing: border-box; }
.mg6 { margin-left: 8px; }
.toolbar .caret { margin: 0 0 0 5px; }
.toolbar > .vsep { margin: 0 8px 0 6px; }
.vsep { width: 1px; height: 22px; background: #c8c8c8; flex: none; }
.chev.tb { position: static; margin: -8px 4px 0 22px; }
.bar-grip { width: 1px; height: 26px; background: #ddd; margin-right: 5px; }
.tool { margin-left: 2px; }
.sigma { font: 700 14px "Liberation Serif", serif; margin: 0 6px 0 13px; }
.toolbar > .tool + svg { margin-left: 7px; }
.peek { position: absolute; left: 705px; top: 3px; width: 62px; height: 4px; border: 1px solid #666; border-bottom: 0; box-sizing: border-box; background: #fff; }
.tools-right { position: absolute; left: 1061px; top: 0; right: 0; height: 31px; display: flex; align-items: center; color: #555; }
.tools-right .tool { margin-left: 3px; white-space: nowrap; }
.tools-right .tool:first-child { margin-left: 0; }
.tools-right .caret { margin: 0 8px 0 6px; border-top-color: #777; }
.tools-right .vsep { margin: 0 5px 0 -4px; }
.tools-right .chev.rt { position: absolute; left: 291px; top: 2px; margin: 0; color: #222; }
.off { color: #888; }

.work { display: flex; height: 625px; background: #f0f0f0; }

.nav { width: 228px; margin-left: 1px; flex: none; display: flex; flex-direction: column; }
.nav-head { height: 17px; margin-top: 3px; display: flex; align-items: center; gap: 9px; background: #fff; border-top: 1px solid #b0b0b0; box-sizing: border-box; }
.nav-head span { margin-right: auto; font-size: 12.500px; }
.nav-head svg:last-child { margin-right: 4px; }
.nav-btn { height: 22px; flex: none; border: 1px solid #a8a8a8; background: linear-gradient(#f8f8f8, #e6e6e6); box-sizing: border-box; text-align: center; font-size: 12px; }
.nav-btn.low { margin-top: 3px; }
.nav-tools { height: 27px; flex: none; display: flex; align-items: center; gap: 5px; padding-left: 6px; }
.nav-tree { height: 486px; flex: none; position: relative; box-sizing: border-box; border: 2px solid #8c8c8c; border-right-color: #aaa; background: #fff; overflow: hidden; padding-top: 0; margin-left: 1px; }
.nrow { height: 16px; display: flex; align-items: center; position: relative; }
.nrow.leaf { background:
  repeating-linear-gradient(#888 0 1px, transparent 1px 2px) 11px 0 / 1px 100% no-repeat,
  repeating-linear-gradient(#888 0 1px, transparent 1px 2px) 31px 0 / 1px 100% no-repeat; }
.exp { position: absolute; left: 6px; top: 4px; }
.hook { position: absolute; height: 0; top: 8px; border-top: 1px dotted #777; }
.leaf .hook { left: 31px; width: 10px; }
.closed .hook, .open .hook { left: 18px; width: 4px; }
.nitem { display: flex; align-items: center; gap: 4px; position: absolute; white-space: nowrap; height: 16px; }
.leaf .nitem { left: 40px; padding: 0 6px 0 2px; }
.closed .nitem, .open .nitem { left: 22px; gap: 5px; }
.nitem.hi { background: #d8d8d8; height: 16px; }
.scroll { position: absolute; left: 206px; top: -2px; width: 16px; height: 486px; background: #f0f0f0; }
.thumb { height: 443px; background: #c8c8c8; }
.scroll svg { position: absolute; left: 3px; top: 472px; }

.mid { width: 90px; flex: none; margin-left: 6px; display: flex; flex-direction: column; background: #fff; border-left: 1px solid #999; border-bottom: 1px solid #999; height: 624px; box-sizing: border-box; position: relative; }
.mid-tools { height: 35px; flex: none; display: flex; align-items: center; gap: 3px; padding-left: 4px; background: #f0f0f0; }
.mid-tools .arrow { margin-left: 16px; }
.search { position: absolute; left: 0; top: 35px; width: 72px; height: 25px; line-height: 23px; border: 1px solid #aaa; background: #fff; box-sizing: border-box; color: #666; padding-left: 2px; white-space: nowrap; overflow: hidden; }
.ct-tree { position: relative; margin-top: 27px; }
.ct { height: 16px; position: relative; }
.ct-exp { position: absolute; left: 26px; top: 4px; }
.ct-dot { position: absolute; left: 40px; top: 8px; width: 4px; border-top: 1px dotted #777; }
.ct-hook { position: absolute; top: 8px; height: 0; border-top: 1px dotted #777; }
.gear { position: absolute; width: 13px; height: 13px; top: 2px; }
.ct-text { position: absolute; top: 0; line-height: 16px; font-size: 11px !important; }
.ct-p .gear, .ct-l .gear { left: 44px; }
.ct-p .ct-text, .ct-l .ct-text { left: 63px; }
.ct-c .gear, .ct-s .gear { left: 62px; }
.ct-c .ct-text, .ct-s .ct-text { left: 81px; }
.ct-c .ct-hook, .ct-s .ct-hook { left: 51px; width: 11px; }
.ct-l .ct-hook { left: 32px; width: 12px; }
.ct-c, .ct-s { background: repeating-linear-gradient(#888 0 1px, transparent 1px 2px) 51px 0 / 1px 8px no-repeat; }
.ct-l { background: repeating-linear-gradient(#888 0 1px, transparent 1px 2px) 32px 0 / 1px 8px no-repeat; }
.ct-s::before { content: ""; position: absolute; left: 60px; top: 0; width: 20px; height: 16px; background: #2a5fc0; }

.right { flex: 1; display: flex; flex-direction: column; }
.sub-tools { height: 29px; display: flex; align-items: center; justify-content: flex-end; gap: 7px; padding: 3px 256px 0 0; box-sizing: border-box; color: #777; flex: none; }
.frame { height: 590px; margin-right: 23px; flex: none; box-sizing: border-box; border-top: 1px solid #555; border-right: 1px solid #555; background: linear-gradient(#b8cbde, #dbe7f4 30px); padding: 30px 6px 9px 0; }
.pane { height: 100%; background: #f0f0f0; border: 1px solid #aaa; border-left: 0; box-sizing: border-box; display: flex; flex-direction: column; }
.pane-head { height: 33px; flex: none; display: flex; align-items: center; justify-content: flex-end; gap: 4px; padding-right: 86px; }
.preview { flex: none; background: #000; display: block; align-self: flex-end; }
.radio { width: 11px; height: 11px; border: 1px solid #888; border-radius: 50%; box-sizing: border-box; background: #fff; display: inline-block; flex: none; position: relative; }
.radio.on::after { content: ""; position: absolute; left: 2px; top: 2px; width: 5px; height: 5px; border-radius: 50%; background: #222; }

.cad { font-family: "Liberation Serif", "Noto Sans CJK SC", serif; fill: #fff; }
.w16 { font-size: 17px; }
.w13 { font-size: 13px; }
.w10 { font-size: 10px; }
.w6 { font-size: 5px; fill: #ddd; }
.g6 { font-size: 6px; fill: #0f0; }

.statusbar { height: 22px; display: flex; gap: 2px; padding-top: 2px; box-sizing: border-box; background: #fff; }
.seg { height: 19px; line-height: 19px; background: #f4f4f4; border: 1px solid #d8d8d8; box-sizing: border-box; padding-left: 1px; white-space: nowrap; overflow: hidden; }
.s1 { width: 148px; }
.s2 { width: 78px; }
.s3 { width: 98px; }
.s4 { width: 48px; }
.s5 { flex: 1; background: #fbfbfb; }

.taskbar { height: 40px; display: flex; background: #0b0d0e; color: #fff; }
.start { width: 48px; flex: none; display: flex; align-items: center; justify-content: center; background: #000; }
.searchbox { width: 344px; flex: none; background: #343434; display: flex; align-items: center; position: relative; }
.cortana { width: 13px; height: 13px; border: 3px solid #eee; border-radius: 50%; margin-left: 11px; flex: none; }
.ph { color: #8c8c8c; font-size: 13.500px; margin-left: 6px; }
.mic { position: absolute; left: 318px; top: 10px; }
.apps { display: flex; margin-left: 1px; }
.app { width: 50px; height: 40px; display: flex; align-items: center; justify-content: center; position: relative; }
.app-ico { width: 24px; height: 24px; }
.app.active { background: #2e3336; width: 48px; }
.app.active + .app { margin-left: 1px; }
.app.open::after { content: ""; position: absolute; left: 3px; right: 3px; bottom: 0; height: 2px; background: #76b9ed; }
.app.active::after { left: 0; right: 0; }
.alert { position: absolute; left: 27px; top: 7px; }
.tray { margin-left: auto; width: 342px; flex: none; display: flex; align-items: center; }
.cpu { width: 48px; text-align: center; display: flex; flex-direction: column; line-height: 20px; white-space: nowrap; flex: none; }
.tr { flex: none; }
.up { margin-left: 20px; }
.bat { margin-left: 12px; }
.wifi { margin-left: 8px; }
.vol { margin-left: 6px; }
.ime { margin-left: 8px; font-size: 14px; width: 14px; }
.sg { margin-left: 14px; }
.slogo { font: 700 13px "Liberation Sans", sans-serif; fill: #fff; }
.slogo.big { font-size: 24px; }
.clock { margin-left: 20px; width: 52px; text-align: center; display: flex; flex-direction: column; line-height: 20px; white-space: nowrap; flex: none; }
.notif { margin-left: 20px; position: relative; width: 24px; height: 24px; }
.badge { position: absolute; left: 8px; top: 7px; width: 18px; height: 18px; border-radius: 50%; background: #333; border: 1px solid #777; box-sizing: border-box; text-align: center; font-size: 11px; font-weight: 700; line-height: 16px; }

.editor { position: absolute; left: 308px; top: 58px; width: 751px; height: 644px; background: #f0f0f0; display: flex; flex-direction: column; box-shadow: 0 2px 6px rgba(0, 0, 0, .35); }
.ed-title { height: 32px; flex: none; background: #fff; position: relative; color: #999; padding: 7px 0 0 8px; box-sizing: border-box; }
.ed-close { position: absolute; left: 731px; top: 8px; width: 19px; height: 19px; background: #e4e4e4; color: #fff; text-align: center; line-height: 18px; }
.ed-tools { height: 25px; flex: none; display: flex; align-items: center; padding: 1px 0 0 4px; background: linear-gradient(#fff, #f1f1f1); border-top: 1px solid #e4e4e4; box-sizing: border-box; color: #222; white-space: nowrap; }
.grip { width: 3px; height: 15px; margin-right: 5px; background: repeating-linear-gradient(#999 0 1px, transparent 1px 3px); flex: none; }
.t { display: flex; align-items: center; gap: 4px; flex: none; }
.t.first { gap: 5px; }
.t + .t { margin-left: 9px; }
.t.near { margin-left: 6px; }
.sep { width: 1px; height: 20px; background: #ccc; margin: 0 7px; flex: none; }
.t.first + .sep { margin-left: 6px; }
.sep.tight { margin-right: 4px; }
.ed-opts { height: 30px; flex: none; display: flex; align-items: center; padding-top: 1px; background: linear-gradient(#f1f1f1, #fdfdfd); box-sizing: border-box; white-space: nowrap; }
.opt-group { margin-left: 5px; width: 187px; height: 24px; background: #ececec; display: flex; align-items: center; padding-left: 4px; box-sizing: border-box; flex: none; }
.opt { display: flex; align-items: center; gap: 10px; margin-right: 8px; }
.opt:first-child { gap: 9px; }
.opt .radio { border-color: #aaa; }
.opt .radio.on::after { background: #777; }
.opt-sep { margin: 0 3px 0 4px; }
.lat { font-size: 13px; flex: none; }
.x-lab { width: 20px; }
.y-lab { width: 20px; margin-left: 13px; }
.mm { margin-left: 6px; width: 22px; }
.mm2 { margin-left: 5px; }
.spin { height: 23px; box-sizing: border-box; border: 1px solid #7a7a7a; background: #f4f4f4; flex: none; text-align: right; padding-right: 16px; line-height: 21px; color: #555; font-size: 13px; position: relative; }
.sx { width: 77px; margin-left: 7px; }
.sy { width: 78px; margin-left: 6px; }
.spin-btns { position: absolute; right: 3px; top: 3px; width: 0; height: 0; border: 3px solid transparent; border-bottom: 4px solid #555; border-top: 0; }
.spin-btns::after { content: ""; position: absolute; left: -3px; top: 10px; width: 0; height: 0; border: 3px solid transparent; border-top: 4px solid #555; border-bottom: 0; }
.canvas { display: block; flex: none; margin-left: 1px; background: #000; }
.dim { font: 700 17px "Liberation Serif", serif; fill: #0f0; }
.dim.c { text-anchor: middle; }
.dim-g { font: 13px "Liberation Serif", serif; fill: #c4c4c4; }
.dim-g2 { font: 14px "Liberation Serif", serif; fill: #c4c4c4; }
.ed-tabs { flex: none; border-bottom: 1px solid #aaa; padding: 2px 0 0 2px; box-sizing: border-box; height: 29px; }
.tab { display: inline-block; width: 57px; height: 23px; line-height: 23px; text-align: center; background: #e5f1fb; border: 1px solid #0078d7; box-sizing: border-box; }
.ed-btns { height: 41px; flex: none; position: relative; }
.btn { position: absolute; height: 23px; top: 9px; background: #e1e1e1; border: 1px solid #adadad; box-sizing: border-box; text-align: center; white-space: nowrap; }
.b1 { left: 313px; width: 105px; }
.b2 { left: 441px; width: 112px; }
.b3 { left: 579px; width: 72px; }
.b4 { left: 667px; width: 71px; }
.ed-status { height: 19px; flex: none; display: flex; gap: 3px; position: relative; background: #f0f0f0; padding-left: 1px; }
.st { background: #fafafa; height: 19px; line-height: 19px; box-sizing: border-box; white-space: nowrap; overflow: hidden; flex: none; padding-left: 1px; }
.s-a { width: 147px; }
.s-b { width: 147px; }
.s-c { width: 451px; }
.resize { position: absolute; right: 2px; bottom: 2px; }

.dialog { position: absolute; left: 98px; top: 177px; width: 410px; height: 221px; background: #f0f0f0; border: 1px solid #4a9fe8; box-sizing: border-box; box-shadow: 0 2px 10px rgba(0, 0, 0, .35); display: flex; flex-direction: column; }
.dlg-title { height: 25px; background: #fff; display: flex; align-items: center; justify-content: space-between; padding: 0 10px 0 5px; flex: none; font-size: 12px; }
.dlg-body { position: relative; flex: 1; }
.grp { position: absolute; left: 12px; top: 21px; width: 383px; height: 58px; margin: 0; padding: 0; box-sizing: border-box; border: 1px solid #dcdcdc; }
.g2 { top: 94px; height: 57px; }
.grp legend { position: absolute; left: 7px; top: -8px; padding: 0; background: #f0f0f0; white-space: nowrap; line-height: 16px; }
.area { position: absolute; left: 7px; top: 9px; width: 365px; height: 41px; background: #fff; border: 1px solid #808080; box-sizing: border-box; padding: 1px 2px; font-size: 11px; line-height: 14px; letter-spacing: -.1px; }
.sel { background: #0078d7; color: #fff; display: inline-block; }
.dlg-btns .btn { top: 164px; }
.d1 { left: 235px; width: 72px; }
.d2 { left: 322px; width: 72px; }

.imebar { position: absolute; left: 1182px; top: 705px; width: 184px; height: 23px; background: #fff; display: flex; align-items: center; }
.sg-big { position: absolute; left: 0; top: -3px; }
.ime-ch { position: absolute; left: 33px; top: 2px; font-size: 14px; font-weight: 700; color: #1a78d0; }
.ime-dot { position: absolute; left: 58px; top: 1px; font-size: 13px; font-weight: 700; color: #1a78d0; }
.ic1 { position: absolute; left: 77px; top: 2px; }
.ic2 { position: absolute; left: 97px; top: 5px; }
.ic3 { position: absolute; left: 120px; top: 4px; }
.ic4 { position: absolute; left: 143px; top: 4px; }
.ic5 { position: absolute; left: 164px; top: 3px; }

.widget { position: absolute; left: 225px; top: 30px; width: 125px; height: 37px; border-radius: 18px; background: linear-gradient(#f4f4f4, #d2d2d2); border: 1px solid #bdbdbd; box-sizing: border-box; box-shadow: 0 1px 3px rgba(0, 0, 0, .3); }
.ball { position: absolute; left: -3px; top: -8px; width: 48px; height: 48px; line-height: 48px; text-align: center; border-radius: 50%; box-sizing: border-box; border: 2px solid #dedede; color: #fff; font-size: 15px; background: linear-gradient(#0c6d42 0, #1c8b52 45%, #2fa858 50%, #74c66e 100%); box-shadow: 0 0 2px rgba(0, 0, 0, .6); }
.w-arrows { position: absolute; left: 49px; top: 4px; display: flex; flex-direction: column; gap: 5px; }
.w-speeds { position: absolute; left: 77px; top: 3px; display: flex; flex-direction: column; font-size: 10px; line-height: 15px; color: #333; }
.w-plus { position: absolute; left: 100px; top: 8px; width: 19px; height: 19px; line-height: 18px; border-radius: 50%; background: radial-gradient(#5aa8f0, #2a6cc8); color: #fff; font-size: 16px; font-weight: 700; text-align: center; }
.w-plus i { position: absolute; left: 11px; top: -4px; width: 9px; height: 9px; border-radius: 50%; background: #d02020; }

.marks { position: absolute; left: 0; top: 0; pointer-events: none; }
</style>

<style>
html, body { background: #f0f0f0; }
.asc { font-family: "DejaVu Sans Mono", monospace; font-size: 10px; }
</style>
